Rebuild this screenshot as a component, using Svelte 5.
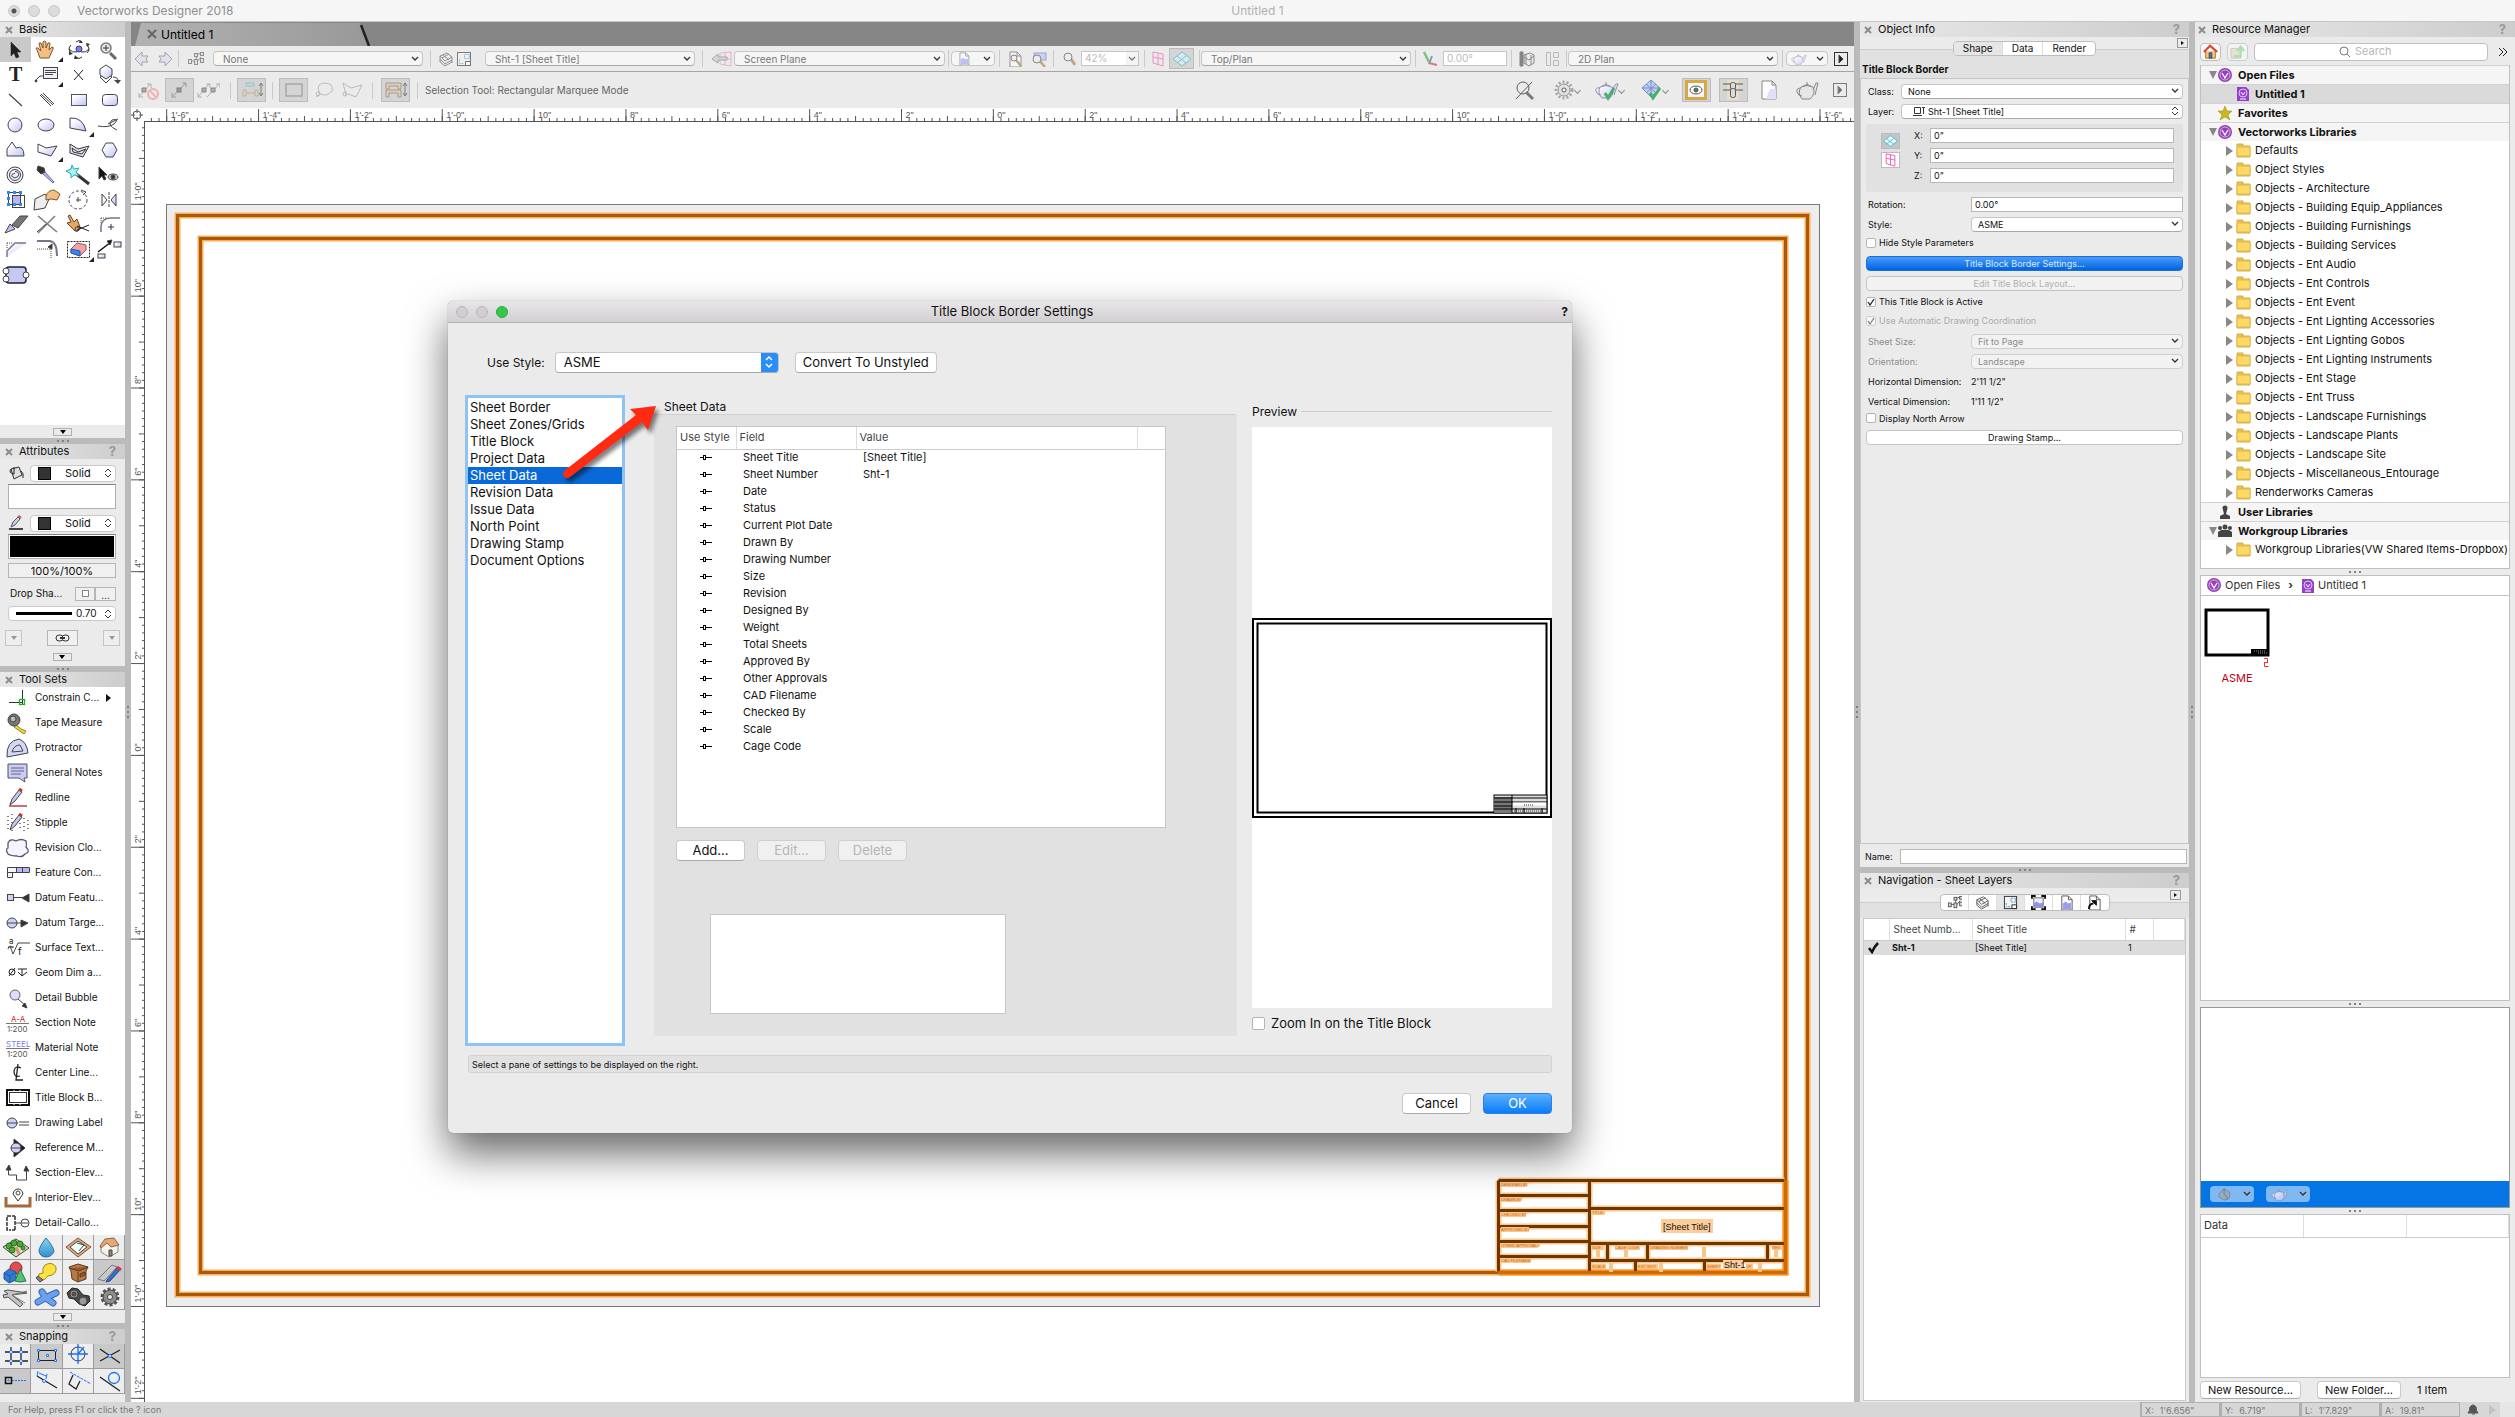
<script>
    // icon artwork, drawn inside an <svg class="ico"> whose default is a thin dark stroke
    const lens = '<path d="M16 16l6 6" stroke="#666" stroke-width="3"/><circle cx="12" cy="11" r="5" fill="#e8e8ee" stroke="#777" stroke-width="1.5"/>';
    const teapot = '<path d="M5 8Q2 14 7 19h8Q20 14 17 8Q11 5 5 8ZM17 11l4-6h2l-4 11M5 9Q0 8 1 12t5 4M11 6V3M7 7q4-3 8 0" fill="url(#lav)" stroke="#8080a0"/>';
    const plane = '<path d="M2 9L11 2 20 9 11 16ZM6 6l9 7M15 6l-9 7" stroke="#3bb5d0" fill="#e2f8fc"/>';
    const clip = '<path d="M3 1h7l4 4v11H3z" fill="#fff" stroke="#555"/><path d="M10 1v4h4" stroke="#555"/>';

    const art = {
        arrow: '<path d="M11 5V19L14 16 16 21 19 20 17 15 21 15Z" fill="#222" stroke="#222" stroke-width=".5"/>',
        hand: '<path d="M9 21L6 13Q4 10 7 11l3 3-2-7q0-2 2-1l2 5V5q1-2 3 0v6l2-5q2-1 2 1l-1 6 3-3q2 0 1 2l-4 9Z" fill="#f1be84" stroke="#80572c"/>',
        orbit: '<circle cx="16" cy="12" r="3" fill="#7a84e8" stroke="#333399"/><path d="M13 5Q16 2 19 5M13 20q3 3 6 0M8 8q-4 4 0 8M24 8q4 4 0 8M6 12q3 4 8 3M26 12q-3 4-8 3" stroke="#333"/><path d="M17 3l3 3-4 0zM12 18l3 4h-4zM6 14l4 3-4 1zM23 6l4 1-3 3z" fill="#333" stroke="none"/>',
        zoom: lens + '<path d="M9 11h6M12 8v6" stroke="#333"/>',
        text: '<text x="9" y="19" font-family="Liberation Serif" font-size="20" font-weight="bold" fill="#222" stroke="none">T</text>',
        callout: '<rect x="12.5" y="5.5" width="14" height="11" fill="#f0f0fa"/><path d="M14 8.500h11M14 10.500h11M14 12.500h8M12 14h-3l-5 5"/><circle cx="5" cy="19" r="1" fill="#222"/>',
        locus: '<path d="M11 8l9 10M20 8l-9 10" stroke="#123"/>',
        stackUp: '<path d="M6 15l6 6 6-6-6-4z" fill="#fff"/><path d="M12 3l6 4v6l-6 4-6-4V7z" fill="url(#lav)"/><path d="M19 15q5 0 5 4"/><path d="M20 18h7l-3 4z" fill="#444" stroke="none"/>',
        line: '<path d="M9 7l13 12" stroke-width="1.2"/>',
        dline: '<path d="M9 8l11 11M12 6l11 11M10 7l12 11"/>',
        rect: '<rect x="8.5" y="7.500" width="15" height="11" fill="url(#lav)" stroke="#555"/>',
        rrect: '<rect x="8.500" y="7.500" width="15" height="11" rx="3" fill="url(#lav)"/>',
        circle: '<circle cx="15" cy="13" r="7" fill="url(#lav)"/>',
        oval: '<ellipse cx="15" cy="13" rx="8" ry="6" fill="url(#lav)"/>',
        arc: '<path d="M7 6Q20 5 23 19L7 16Z" fill="url(#lav)"/>',
        freehand: '<path d="M4 14Q14 16 20 12Q26 6 18 8Q12 13 23 18M14 12l10-5"/>',
        bezier: '<path d="M7 19V12L12 5 16 11Q24 8 24 19Z" fill="url(#lav)"/>',
        poly: '<path d="M7 7l8 4 11-2-6 10-13-4z" fill="url(#lav)"/>',
        dpoly: '<path d="M7 7l8 5 11-3-6 11-13-4zM9 11l6 4 8-3-4 5-9-2z" fill="#e4e4f4" stroke="#333"/>',
        hex: '<path d="M12 6h7l4 7-4 7h-7l-4-7z" fill="url(#lav)"/>',
        spiral: '<circle cx="15" cy="13" r="8" fill="#f0f0ff"/><circle cx="15" cy="13" r="5.500"/><path d="M15 9.500q5 0 3 5-3 3-6 0-1-3 3-3"/>',
        dropper: '<path d="M13 9L23 20l-1 1L11 11z" fill="#b9bcf0" stroke="#6668aa"/><path d="M7 4l6 2 1 4-4 2-4-4z" fill="#333"/>',
        wand: '<path d="M12 11L26 22" stroke="#333" stroke-width="3"/><path d="M9 3l2 4 5-1-3 4 3 4-5-1-3 3V12L3 9l5-2z" fill="#a5f3f7" stroke="#3aa"/>',
        visible: '<path d="M5 5v12l3-3 2 4 2-1-2-4h3z" fill="#111"/><ellipse cx="19" cy="15" rx="5" ry="3" fill="#ccd"/><circle cx="19" cy="15" r="2" fill="#333"/>',
        clipTool: '<rect x="12.500" y="8.500" width="12" height="12"/><rect x="8.500" y="5.500" width="12" height="12"/><rect x="13" y="9" width="7" height="8" fill="#b8b8f5" stroke="none"/><path d="M7 4h3v3H7zM13 4h3v3h-3zM19 4h3v3h-3zM7 16h3v3H7zM19 16h3v3h-3zM7 10h3v3H7zM13 16h3v3h-3z" fill="#2a8be8" stroke="none"/>',
        reshape: '<path d="M4 12l10-5 4 5-4 9-11 2z" fill="#eee"/><path d="M15 9q2-6 8-6l6 4-3 6-6-1-5 1z" fill="#f1be84" stroke="#80572c"/>',
        rotate: '<circle cx="15" cy="13" r="9" stroke="#447" stroke-dasharray="3 2"/><path d="M13 13h5M15 10v5M18 3l5 2-3 3"/>',
        mirror: '<path d="M15 5v16" stroke-dasharray="3 1"/><path d="M8 7l5 6-5 6zM22 7l-5 6 5 6z" fill="url(#lav)"/>',
        knife: '<path d="M5 21l5-9 5 5z" fill="#bfc1f0"/><path d="M12 13L20 4h8l-10 12z" fill="#777"/>',
        trim: '<path d="M7 4l19 16M24 4L7 21" stroke="#778" stroke-width="1.5"/><path d="M6 20l9-8" stroke="#444"/>',
        cut: '<path d="M7 3l4 7 3-3 3 8q0 5-5 4l-8-8 4-1-3-6z" fill="#e7a764" stroke="#6d4520"/><path d="M14 14l12 5M14 18l12-5" stroke="#222"/><circle cx="14" cy="17" r="2"/>',
        fillet: '<path d="M7 20V14Q8 6 17 6h9" stroke="#778" stroke-width="1.5"/><path d="M17 12v6M14 15h6" stroke="#334"/><path d="M7 6h6M7 6v6" stroke-dasharray="1 1"/>',
        chamfer: '<path d="M7 20v-6l8-8h11v0L7 20" fill="url(#lav)" stroke="none"/><path d="M7 20v-6l8-8h11" stroke="#778" stroke-width="1.5"/><path d="M7 6h5M7 6v5" stroke-dasharray="1 1"/>',
        offset: '<path d="M6 4h13q7 1 7 15" stroke="#778" stroke-width="2"/><path d="M6 12h14v10" stroke-dasharray="1 1"/><path d="M17 10l4-3v5z" fill="#334"/>',
        eraser: '<rect x="4.500" y="4.500" width="22" height="16" stroke="#222" stroke-dasharray="2 1"/><path d="M8 12l6-6 9 2v5l-6 6-9-3z" fill="#f4a3a3" stroke="#955"/><path d="M8 12l9 2v5l-9-3z" fill="#3b86e6" stroke="#25c"/>',
        connect: '<path d="M4 15L17 5" stroke="#111" stroke-width="1.5"/><path d="M18 3l-5 1 3 4z" fill="#111"/><rect x="20" y="5" width="7" height="5" fill="url(#lav)"/><rect x="4" y="17" width="7" height="4" fill="url(#lav)"/>',
        block: '<rect x="6" y="5" width="20" height="16" rx="3" fill="#c6c8f5" stroke="#223" stroke-width="1.5"/><circle cx="6" cy="9" r="3" fill="#fff"/><circle cx="6" cy="17" r="3" fill="#fff"/><circle cx="26" cy="13" r="3" fill="#fff"/>',

        constrain: '<path d="M22.500 5v14M9 17.500h13" stroke="#333"/><rect x="19.500" y="14.500" width="5" height="5" stroke="#1db31d" stroke-width="1.3"/>',
        tape: '<path d="M15 14l6 5 5 2-2 3-10-7z" fill="#f2dc3a" stroke="#98811c"/><circle cx="14" cy="10" r="6" fill="#777"/><circle cx="13" cy="9" r="3" fill="#bbb"/>',
        protractor: '<path d="M7 22Q6 6 19 4Q27 7 28 18ZM12 17q2-7 8-7l3 6z" fill="#d5d7f8"/>',
        notes: '<path d="M8 4h19v14h-3l1 4-6-4H8z" fill="#c9cbf8" stroke="#555"/><path d="M11 8h13M11 11h13M11 14h10" stroke="#667"/>',
        redline: '<path d="M9 21h18" stroke="#b02030" stroke-width="1.3"/><path d="M10 20l2-6 7-9 3 2-7 9z" fill="#c4c9f4"/><path d="M19 4l3 2" stroke="#c33" stroke-width="3"/>',
        stipple: '<path d="M8 6v15M12 4v17M20 5v16M24 8v14M28 10v11" stroke="#333" stroke-dasharray="1 3" stroke-width="1.2"/><path d="M10 20l2-6 7-9 3 2-7 9z" fill="#c4c9f4"/><path d="M19 4l3 2" stroke="#c33" stroke-width="3"/>',
        cloud: '<path d="M8 8q2-5 8-2q5-3 10 0q1 4 0 6q5 5-1 7q-3 4-8 2q-6 0-9-2q-3-5 0-6z" fill="#f5f5ff" stroke="#557" stroke-width="1.3"/>',
        feature: '<path d="M7.500 7.500h22v5h-17v5h-5z" fill="#f4f4fc"/><path d="M17 8h12v4H17z" fill="#b5b8f4" stroke="none"/><path d="M16.500 8v4M22.500 8v4M8 12.500h5"/>',
        datum: '<rect x="7.500" y="9.500" width="6" height="6" fill="#d0d2fa"/><path d="M13 12.500h10"/><path d="M29 9v8l-7-4z" fill="#333"/>',
        target: '<circle cx="12" cy="13" r="5" fill="#d0d2fa"/><path d="M7 13h16"/><path d="M21 10l7 3-7 4z" fill="#333"/>',
        surface: '<path d="M10 11l3 8 5-11h12M8 12h6M13 13q-4-4-5 1"/><text x="9" y="9" font-size="8" fill="#222" stroke="none">a</text><text x="18" y="20" font-size="10" fill="#222" stroke="none">f</text>',
        geom: '<circle cx="12" cy="12" r="3" stroke="#222"/><path d="M9 16l6-8M18 9h9M22 9v6M18 12l4 4 5-4" stroke="#222"/>',
        bubble: '<circle cx="15" cy="10" r="5" fill="#dcdefa" stroke="#666"/><path d="M18 14l8 7"/><path d="M27 23l-5-2 3-3z" fill="#333"/>',
        section: '<text x="11" y="12" font-size="8" fill="#d02020" stroke="none">A-A</text><path d="M6 13.500h23" stroke="#777"/><text x="7" y="22" font-size="8" fill="#555" stroke="none">1:200</text>',
        material: '<text x="6" y="12" font-size="8" fill="#7a80e0" stroke="none">STEEL</text><path d="M6 13.500h23" stroke="#777"/><text x="7" y="22" font-size="8" fill="#555" stroke="none">1:200</text>',
        center: '<path d="M21 8q-6-3-7 3q0 7 6 5M18 4l-2 16h7" stroke="#222" stroke-width="1.3"/>',
        titleBlock: '<rect x="7" y="5" width="22" height="15" fill="#fff" stroke="#111" stroke-width="2"/><rect x="9.500" y="7.500" width="17" height="10" stroke="#333"/><path d="M14 5v2M20 5v2M14 18v2M20 18v2" stroke="#fff"/>',
        label: '<circle cx="12" cy="13" r="5" fill="#d0d2fa"/><path d="M7 13h11M19 12h10M19 15h10"/>',
        reference: '<path d="M14 4l11 9-11 9z" fill="#111"/><circle cx="16" cy="13" r="5" fill="#d0d2fa"/><path d="M11 13h10"/>',
        sectionElev: '<path d="M8.500 7v8h8v5h10V8"/><path d="M6 10l3-5 2 5zM24 11l2-5 3 5z" fill="#333"/>',
        interior: '<path d="M6 12v9h24v-9" stroke="#a36a3c" stroke-width="3"/><path d="M18 16l-5-7q1-5 5-5t5 5z" stroke="#333" fill="#fff"/><circle cx="18" cy="8" r="2"/>',
        callo: '<path d="M11 6H7v14h4M15 6v14M12 6h3M12 20h3" stroke="#333" stroke-width="1.5" stroke-dasharray="4 1"/><circle cx="25" cy="13" r="4"/><path d="M15 13h6M22 13h6"/>',

        site: '<path d="M3 12L16 4l13 9-13 9z" fill="#cfe6b4"/><g fill="#4ea53a" stroke="#2c6b20"><circle cx="9" cy="11" r="3"/><circle cx="14" cy="8" r="3"/><circle cx="20" cy="9" r="3"/><circle cx="12" cy="15" r="3"/><circle cx="23" cy="13" r="2"/></g><path d="M16 12l3 7" stroke="#d88" stroke-width="3"/>',
        drop: '<path d="M15 3Q8 12 8 16q1 6 7 6t8-6Q22 11 15 3Z" fill="url(#water)" stroke="#2273a4"/>',
        plan: '<path d="M3 12L15 3l13 9-13 10z" fill="#dfa97b" stroke="#7b5639"/><path d="M7 12l8-6 9 6-9 7z" fill="#eff"/><path d="M14 8l7 2-5 6"/>',
        house: '<path d="M7 11v6l8 5 9-5v-8l-6-4z" fill="#f5f3ee" stroke="#887"/><path d="M6 11l5-7 9-1 5 7-8 2-4-4-6 5z" fill="#e3a878" stroke="#8d6545"/><path d="M15 15h3v6h-3z" fill="#987"/>',
        solids: '<circle cx="16" cy="8" r="6" fill="#e04e50" stroke="#923"/><path d="M4 13l5-4 7 3v8l-7 3-5-4z" fill="#3479d5" stroke="#225a9c"/><path d="M4 13l6 3 6-4M10 16v6" stroke="#225a9c"/><path d="M20 9l6 12q-6 2-11 0z" fill="#51c46e" stroke="#275"/>',
        bulb: '<path d="M14 5q7-4 11 2 1 8-8 9l-4 4-6-2 1-4 4-1q-1-5 2-8z" fill="#ffe23d" stroke="#9b8724"/><path d="M7 16l5 4-3 2-4-4z" fill="#888"/>',
        box: '<path d="M6 7l9-3 10 3-2 4v8l-8 3-6-3-1-8z" fill="#b87946" stroke="#5d3a20"/><path d="M6 8l10 3 9-4M15 12v9M17 14l5-2v3l-5 2z" fill="#965a2e" stroke="#5d3a20"/>',
        drafting: '<path d="M4 19L18 5l5 2L10 21z" fill="#c9c9c9" stroke="#777"/><path d="M13 20L23 8l3 2-10 11-4 1z" fill="#356fd0" stroke="#224a95"/><path d="M23 7l4 3" stroke="#d34" stroke-width="3"/>',
        beam: '<path d="M4 6l4-1 19 3-15 2 11 9-3 3L8 12l-4 1-1-3 5-1z" fill="#c4c4c4" stroke="#555"/><path d="M27 6l-15 4 13 8" stroke="#777"/>',
        pipe: '<path d="M7 17L14 13 25 8M11 7l4 6 7 5" stroke="#3666b1" stroke-width="7" stroke-linecap="round" stroke-linejoin="round"/><path d="M7 17L14 13 25 8M11 7l4 6 7 5" stroke="#6aa0ee" stroke-width="5" stroke-linecap="round" stroke-linejoin="round"/>',
        bolt: '<path d="M4 8l5-5 6 1 5 6 6 1 1 5-5 5-6-2-5-5-5-1z" fill="#4a4a4a" stroke="#222"/><circle cx="11" cy="9" r="4" fill="#9a9a9a"/><circle cx="20" cy="16" r="4" fill="#999"/><circle cx="11" cy="9" r="2" fill="#555"/>',
        gear: '<circle cx="16" cy="12" r="8" stroke="#555" stroke-width="3" stroke-dasharray="3 2"/><circle cx="16" cy="12" r="7" fill="#8c8c8c" stroke="#444"/><circle cx="16" cy="12" r="2.500" fill="#eee"/>',

        snapGrid: '<path d="M5 8h23M5 17h23M11 3v18M21 3v18" stroke="#222" stroke-width="1.3"/><g fill="#fff" stroke="#1670ff"><circle cx="11" cy="8" r="1.5"/><circle cx="21" cy="8" r="1.5"/><circle cx="11" cy="17" r="1.5"/><circle cx="21" cy="17" r="1.5"/></g>',
        snapObj: '<rect x="7.500" y="6.500" width="17" height="10" stroke="#222"/><g fill="#fff" stroke="#1670ff"><path d="M6.500 5.500h2v2h-2zM23.500 5.500h2v2h-2zM6.500 15.500h2v2h-2zM23.500 15.500h2v2h-2zM15.500 10.500h2v2h-2z"/></g>',
        snapAngle: '<circle cx="15" cy="10" r="7" stroke="#334"/><path d="M5 10h20M15 0v20M15 10l6-7" stroke="#1670ff" stroke-width="1.3"/>',
        snapX: '<path d="M6 5l20 14M6 17L26 6" stroke="#222" stroke-width="1.3"/><circle cx="16" cy="12" r="1.5" stroke="#1670ff" fill="#fff"/>',
        snapSmart: '<rect x="5.500" y="8.500" width="6" height="6" stroke="#111" stroke-width="1.5"/><path d="M8 11h1v1H8zM12 11.500h14" stroke="#1670ff" stroke-dasharray="2 1"/>',
        snapDist: '<path d="M6 7l20 12" stroke="#222" stroke-width="1.3"/><path d="M8 4l7 3M7 2l-1 5M16 5l-1 5" stroke="#1670ff"/><circle cx="13" cy="12" r="1.5" stroke="#1670ff" fill="#fff"/>',
        snapPlane: '<path d="M10 6L6 15l7 5 4-8" stroke="#222" stroke-width="1.3"/><path d="M7 3l21 12" stroke="#1670ff" stroke-dasharray="3 1"/>',
        snapTan: '<circle cx="20" cy="9" r="5.5" stroke="#1670ff" stroke-width="1.3"/><path d="M6 8l20 14" stroke="#222" stroke-width="1.3"/>',

        back: '<path d="M8 1L1 8l7 7v-4h6l-2-3 2-3H8z" fill="#d8daf6" stroke="#777"/>',
        forward: '<path d="M8 1l7 7-7 7v-4H2l2-3-2-3h6z" fill="#d8daf6" stroke="#777"/>',
        classes: '<g fill="#ddd" stroke="#555"><path d="M4 10h4M9 8l1-4M10 11l4-5M9 4l5-2"/><rect x="1.500" y="8.500" width="3" height="4"/><rect x="7.500" y="8.500" width="3" height="5"/><rect x="7.500" y="2.500" width="3" height="3"/><rect x="13.500" y="1.500" width="3" height="3"/><rect x="13.500" y="7.500" width="3" height="4"/></g>',
        stack: '<path d="M2 5L9 2l5 4-7 4ZM2 8l5 5 7-4M2 11l5 4 7-4M2 5v6M14 6v6M5 4l6 5M11 3L4 7" stroke="#555"/>',
        sheetIcon: '<rect x="1.500" y="1.500" width="13" height="13" fill="#f4f4f4" stroke="#333"/><path d="M3.500 8.500v4h4M8.500 3.500h5v4h-5z" stroke="#4a9acc" stroke-dasharray="2 1"/><path d="M9.500 10.500h5v4h-5z" fill="#fff" stroke="#222"/>',
        screenPlane: '<path d="M9 2l11-1v14L9 13zM14 2v12M9 8h11" stroke="#e58ac0"/><path d="M1 8l6-5v3h9v3H7v3z" fill="#ccc" stroke="#777"/>',
        page: clip + '<path d="M4 9l3-2 3 2 3-1v7H4z" fill="#9b9dee" stroke="none"/>',
        fit: clip + '<path d="M9 9l5 6" stroke="#a87a30" stroke-width="2.5"/><circle cx="7" cy="7" r="3" fill="#eee"/>',
        fitObj: '<rect x="4" y="2" width="12" height="7" fill="#b7c4ee" stroke="#6478b8"/><path d="M9 9l6 7" stroke="#a87a30" stroke-width="2.5"/><circle cx="7" cy="8" r="4" fill="#eee"/>',
        mag: '<path d="M9 8l4 6" stroke="#a87a30" stroke-width="3"/><circle cx="6" cy="6" r="4" fill="#eee" stroke="#444"/>',
        pinkPlane: '<path d="M3 1l10 2v12L3 12zM8 2v12M3 6l10 2" stroke="#f050b0"/>',
        plane,
        axis: '<path d="M2 1l5 10" stroke="#3a3" stroke-width="2.5"/><path d="M7 13l3-8" stroke="#369" stroke-width="2"/><path d="M7 12l8 2" stroke="#c33" stroke-width="2"/>',
        layerOpt: '<path d="M1 1h3v14H1z" fill="#444"/><path d="M5 4l6-2 4 2v8l-5 3-5-3zM5 6l5 3 5-4M7 3v10M12 4v10"/>',
        split: '<path d="M2.500 1.500h4v13h-4zM9.500 1.500h5v5h-5zM9.500 9.500h5v5h-5z" stroke="#999"/>',
        teapot,
        play: '<rect x="1.500" y="1.500" width="13" height="13" stroke="#333"/><path d="M6 4l4 4-4 4z" fill="#222"/>',
        none: '<path d="M3 18l11-13M11 5h4v4M3 14v4h4" stroke="#888"/><path d="M6 9h4v4H6z" fill="#888"/><circle cx="17" cy="15" r="5" stroke="#f08a8a" stroke-width="2"/><path d="M14 12l6 6" stroke="#f08a8a" stroke-width="2"/>',
        single: '<path d="M5 18L19 4M15 4h4v4M5 14v4h4" stroke="#777"/><rect x="10" y="9" width="4" height="4" fill="#777"/>',
        multi: '<path d="M2 18L13 5M10 5h4v4M11 18L23 5M20 5h4v4M2 14v4h4" stroke="#888"/><path d="M6 9h4v4H6zM15 9h4v4h-4z" fill="#888"/>',
        resize: '<path d="M6 3h8v3H6z" stroke="#5bc"/><path d="M6 13h9M3 10h3v6H3zM15 10h3v6h-3z" stroke="#b96"/><path d="M21 3v13M19 6l2-3 2 3M19 13l2 3 2-3"/>',
        marquee: '<rect x="4" y="4" width="16" height="12" stroke="#888" stroke-width="1.5"/>',
        lasso: '<path d="M7 14Q2 4 11 3q10 0 8 8-5 6-12 3zl-4 3" stroke="#999"/><circle cx="5" cy="14" r="2" stroke="#999"/>',
        polyLasso: '<path d="M6 15L3 3l8 5 11-3-6 12-8-3" stroke="#999"/><circle cx="5" cy="14" r="2" stroke="#999"/>',
        chair: '<path d="M2 9V3h15v6h-3V6H5v3zM2 17v-7h15v7h-3v-4H5v4z" fill="#e7c9a4" stroke="#876"/><path d="M21 3v13M19 6l2-3 2 3M19 13l2 3 2-3"/>',
        noMag: '<path d="M4 20L20 3" stroke="#444"/><circle cx="11" cy="9" r="6"/><path d="M14 13l7 7" stroke="#666" stroke-width="3"/>',
        cog: '<circle cx="11" cy="11" r="8" stroke="#999" stroke-width="3" stroke-dasharray="2 2"/><circle cx="11" cy="11" r="6" fill="#ddd" stroke="#888"/><circle cx="11" cy="11" r="2" fill="#fff"/>',
        potCheck: teapot + '<path d="M10 14l3 5 6-10" stroke="#2aa84f" stroke-width="3"/>',
        gemCheck: '<path d="M1 9L10 1l9 8-9 9zM1 9h18M10 1v17M5 5l10 9M15 5L5 14" fill="#bccbf5" stroke="#5e7fbc"/><path d="M9 14l3 5 7-10" stroke="#2aa84f" stroke-width="3"/>',
        eye: '<rect x="2.500" y="2.500" width="19" height="17" fill="#fff" stroke="#d8a030" stroke-width="3"/><ellipse cx="12" cy="11" rx="6" ry="4"/><circle cx="12" cy="11" r="2" fill="#555"/>',
        chain: '<path d="M6 1h12v20H6z" fill="#ecdfc8" stroke="none"/><path d="M2 5h20M2 11h20"/><rect x="9.500" y="3.500" width="5" height="8" rx="2" fill="#ddd"/><rect x="9.500" y="9.500" width="5" height="9" rx="2" fill="#ddd"/>',
        newPage: '<path d="M4 2h10l4 4v14H4zM14 2v4h4" fill="#fff" stroke="#777"/><path d="M12 10h6v10H8z" fill="#dedff8" stroke="none"/>',
        kettle: '<path d="M6 8Q2 14 7 20h8Q21 15 18 8Q12 5 6 8ZM18 11l3-7h2l-3 12M6 9Q1 9 2 13t5 4M12 6V3M8 7q4-3 8 0" fill="#e6e6e6" stroke="#777"/>',

        bucket: '<path d="M3 4l8-2 3 8-8 4z" fill="#ddd" stroke="#333"/><path d="M3 4q-3 4 3 5M13 6q3 2 2 7M6 2v7" stroke="#222"/>',
        pencil: '<path d="M1 14h14" stroke="#111" stroke-width="1.5"/><path d="M3 12l2-5 5-5 2 2-5 6z" fill="#c9cff5" stroke="#555"/><path d="M10 1l3 2" stroke="#c55" stroke-width="2.5"/>',
        link: '<rect x="1" y="2" width="7" height="6" rx="3" stroke="#333"/><rect x="7" y="2" width="7" height="6" rx="3" stroke="#333"/><path d="M5 5h5" stroke="#333" stroke-width="2"/>',
        home: '<path d="M3 8v8h11V8" fill="#f4c878" stroke="#a06a20"/><path d="M1 9l7-7 8 7" stroke="#cf4a3a" stroke-width="2.5"/><path d="M7 10h3v6H7z" fill="#3a78c8"/>',
        upload: '<rect x="1" y="5" width="11" height="11" fill="#e8dccc" stroke="#bbb"/><path d="M4 14h8V6M8 8l4-5 4 5" stroke="#8fdc8f" stroke-width="2.5"/>',
        vw: '<circle cx="7" cy="7" r="7" fill="#9440b8" stroke="none"/><circle cx="7" cy="7" r="5" stroke="#d9b0ea"/><path d="M4 5l3 5 3-5" stroke="#fff" stroke-width="1.3"/>',
        vwFile: '<path d="M1 0h9l3 3v11H1z" fill="#9440c8" stroke="none"/><circle cx="7" cy="6" r="4" stroke="#e5c5f3"/><path d="M5 5l2 3 2-3M4 12h6" stroke="#fff"/>',
        star: '<path d="M7 0l2 5 5 0-4 4 2 5-5-3-5 3 2-5-4-4h5z" fill="#c8b820" stroke="#978a12" stroke-width=".5"/>',
        user: '<circle cx="7" cy="3" r="2.5" fill="#444" stroke="none"/><path d="M5 5h4l-1 4 4 2v3H2v-3l4-2z" fill="#444" stroke="none"/>',
        users: '<g fill="#444" stroke="none"><circle cx="7" cy="3" r="2.5"/><circle cx="2" cy="4" r="2"/><circle cx="12" cy="4" r="2"/><path d="M0 13V8l3-2h8l3 2v5z"/></g>',
        folder: '<path d="M1 1h6v2h7v11H1z" fill="#e8c050" stroke="#d9ae46"/><path d="M1 4h13v9H1z" fill="#ffd966" stroke="#dfb84f"/>',
        house2: '<path d="M2 8l6-6 7 5-1 7-6 2-6-4z" fill="#a0a8a8" stroke="#667"/><path d="M8 2v6l5 7" stroke="#556"/>',
        viewport: '<path d="M1 4V1h4M11 1h4v3M1 12v3h4M15 12v3h-4" stroke="#111" stroke-width="2"/><path d="M3 3h10v10H3z" fill="#f0f0fc" stroke="#666"/><path d="M3 9l3-2 3 2 4-1v5H3z" fill="#8f92ec" stroke="none"/>',
        refs: clip + '<path d="M2 15q0-6 5-6" stroke="#111" stroke-width="2"/><path d="M5 6h5v5z" fill="#111" stroke="#111"/>'
    };

    const tools = [
        'arrow', 'hand', 'orbit', 'zoom',
        'text', 'callout', 'locus', 'stackUp',
        'line', 'dline', 'rect', 'rrect',
        'circle', 'oval', 'arc', 'freehand',
        'bezier', 'poly', 'dpoly', 'hex',
        'spiral', 'dropper', 'wand', 'visible',
        'clipTool', 'reshape', 'rotate', 'mirror',
        'knife', 'trim', 'cut', 'fillet',
        'chamfer', 'offset', 'eraser', 'connect',
        'block'
    ];
    const withMenu = ['hand', 'callout', 'arc', 'poly', 'eraser'];

    const toolSets = [
        ['constrain', 'Constrain C...'],
        ['tape', 'Tape Measure'],
        ['protractor', 'Protractor'],
        ['notes', 'General Notes'],
        ['redline', 'Redline'],
        ['stipple', 'Stipple'],
        ['cloud', 'Revision Clo...'],
        ['feature', 'Feature Con...'],
        ['datum', 'Datum Featu...'],
        ['target', 'Datum Targe...'],
        ['surface', 'Surface Text...'],
        ['geom', 'Geom Dim a...'],
        ['bubble', 'Detail Bubble'],
        ['section', 'Section Note'],
        ['material', 'Material Note'],
        ['center', 'Center Line...'],
        ['titleBlock', 'Title Block B...'],
        ['label', 'Drawing Label'],
        ['reference', 'Reference M...'],
        ['sectionElev', 'Section-Elev...'],
        ['interior', 'Interior-Elev...'],
        ['callo', 'Detail-Callo...']
    ];
    const setIcons = ['site', 'drop', 'plan', 'house', 'solids', 'bulb', 'box', 'drafting', 'beam', 'pipe', 'bolt', 'gear'];
    const snaps = ['snapGrid', 'snapObj', 'snapAngle', 'snapX', 'snapSmart', 'snapDist', 'snapPlane', 'snapTan'];
    const snapsOn = ['snapObj', 'snapX', 'snapSmart'];

    const libraries = [
        'Defaults', 'Object Styles', 'Objects - Architecture', 'Objects - Building Equip_Appliances',
        'Objects - Building Furnishings', 'Objects - Building Services', 'Objects - Ent Audio',
        'Objects - Ent Controls', 'Objects - Ent Event', 'Objects - Ent Lighting Accessories',
        'Objects - Ent Lighting Gobos', 'Objects - Ent Lighting Instruments', 'Objects - Ent Stage',
        'Objects - Ent Truss', 'Objects - Landscape Furnishings', 'Objects - Landscape Plants',
        'Objects - Landscape Site', 'Objects - Miscellaneous_Entourage', 'Renderworks Cameras'
    ];

    const panes = [
        'Sheet Border', 'Sheet Zones/Grids', 'Title Block', 'Project Data', 'Sheet Data',
        'Revision Data', 'Issue Data', 'North Point', 'Drawing Stamp', 'Document Options'
    ];
    let pane = $state('Sheet Data');

    const fields = [
        ['Sheet Title', '[Sheet Title]'], ['Sheet Number', 'Sht-1'], ['Date', ''], ['Status', ''],
        ['Current Plot Date', ''], ['Drawn By', ''], ['Drawing Number', ''], ['Size', ''],
        ['Revision', ''], ['Designed By', ''], ['Weight', ''], ['Total Sheets', ''],
        ['Approved By', ''], ['Other Approvals', ''], ['CAD Filename', ''], ['Checked By', ''],
        ['Scale', ''], ['Cage Code', '']
    ];

    const coords = [['X:', `1'6.656"`], ['Y:', '6.719"'], ['L:', `1'7.829"`], ['A:', '19.81°']];

    // rulers: one labelled tick every two inches, twelve small ones between
    const step = 91.85;
    const inch = (n) => (n >= 12 ? `1'-${n - 12}"` : `${n}"`);
    const ticks = (from, first, count) =>
        Array.from({ length: count }, (_, i) => ({ at: from + (i - first) * step / 12, tall: (i - first) % 6 === 0 }));
    const across = Array.from({ length: 19 }, (_, i) => ({ at: 166.7 + i * step, text: inch(Math.abs(i - 9) * 2) }));
    const down = Array.from({ length: 14 }, (_, i) => ({ at: 204.3 + i * step, text: inch(Math.abs(i - 6) * 2) }));
    const minorX = ticks(166.7, 2, 223);
    const minorY = ticks(204.3, 10, 167);

    // title block linework: x1 y1 x2 y2
    const blockLines = [
        [1498, 1180, 1784, 1180], [1589, 1208, 1784, 1208], [1589, 1243, 1784, 1243], [1589, 1260, 1784, 1260],
        [1498, 1195, 1588, 1195], [1498, 1210, 1588, 1210], [1498, 1226, 1588, 1226], [1498, 1241, 1588, 1241], [1498, 1256, 1588, 1256],
        [1498, 1180, 1498, 1271], [1589, 1180, 1589, 1271],
        [1607, 1243, 1607, 1260], [1647, 1243, 1647, 1260], [1767, 1243, 1767, 1260],
        [1635, 1260, 1635, 1271], [1704, 1260, 1704, 1271]
    ];
    const blockTexts = [
        ['DESIGNED BY', 1501, 1182, 26], ['DRAWN BY', 1501, 1197, 20], ['CHECKED BY', 1501, 1212, 25],
        ['APPROVED BY', 1501, 1227, 28], ['OTHER APPROVALS', 1501, 1243, 37], ['CAD FILENAME', 1501, 1258, 30],
        ['TITLE', 1592, 1210, 13], ['SIZE', 1592, 1245, 12], ['CAGE CODE', 1615, 1245, 25],
        ['DRAWING NUMBER', 1650, 1245, 38], ['REV', 1772, 1245, 10], ['SCALE', 1592, 1264, 14],
        ['EST WGT', 1638, 1264, 20], ['SHEET', 1707, 1264, 14], ['OF', 1746, 1264, 7]
    ];
    const inserts = [[1596, 1247], [1624, 1247], [1702, 1247], [1774, 1247], [1609, 1262], [1659, 1262], [1758, 1262]];
</script>

{#snippet icon(name, w = 31, h = 25)}
    <svg class="ico" width={w} height={h} viewBox="0 0 {w} {h}" aria-hidden="true">{@html art[name]}</svg>
{/snippet}

{#snippet head(title, help = true)}
    <header class="panel-head">
        <button class="close" aria-label="Close {title}"><svg class="ico" width="8" height="8" viewBox="0 0 8 8"><path d="M1 1l6 6M7 1L1 7" stroke="#8c8c8c" stroke-width="2" /></svg></button>
        <h2>{title}</h2>
        {#if help}<span class="help">?</span>{/if}
    </header>
{/snippet}

{#snippet fold()}
    <div class="fold"><button aria-label="Expand panel"><svg width="6" height="4" viewBox="0 0 6 4"><path d="M0 0h6L3 4z" /></svg></button></div>
{/snippet}

{#snippet dots()}
    <div class="dots"><i></i><i></i><i></i></div>
{/snippet}

<svg class="defs" width="0" height="0" aria-hidden="true">
    <defs>
        <linearGradient id="lav" x1="0" y1="0" x2="1" y2="1">
            <stop offset=".2" stop-color="#fff" />
            <stop offset="1" stop-color="#bfc2f6" />
        </linearGradient>
        <linearGradient id="water" x1="0" y1="0" x2="0" y2="1">
            <stop offset="0" stop-color="#8fd0f2" />
            <stop offset="1" stop-color="#2f8fcc" />
        </linearGradient>
    </defs>
</svg>

<div class="app">
    <header class="titlebar">
        <span class="lights"><i class="edited"></i><i></i><i></i></span>
        <span class="app-name">Vectorworks Designer 2018</span>
        <span class="doc-name">Untitled 1</span>
    </header>

    <div class="main">
        <aside class="left">
            {@render head('Basic', false)}
            <div class="tools">
                {#each tools as t}
                    <button class:on={t === 'arrow'} aria-label={t}>
                        {@render icon(t)}
                        {#if withMenu.includes(t)}<i class="more"></i>{/if}
                    </button>
                {/each}
            </div>
            {@render fold()}
            {@render dots()}

            {@render head('Attributes')}
            <div class="attrs">
                <div class="attr-row">
                    {@render icon('bucket', 16, 16)}
                    <label class="solid"><i></i><select aria-label="Fill style"><option>Solid</option></select></label>
                </div>
                <div class="swatch"></div>
                <div class="attr-row">
                    {@render icon('pencil', 16, 16)}
                    <label class="solid"><i></i><select aria-label="Pen style"><option>Solid</option></select></label>
                </div>
                <div class="swatch black"></div>
                <button class="flat opacity">100%/100%</button>
                <div class="shadow-row">
                    <span>Drop Sha...</span>
                    <button class="flat" aria-label="Drop shadow"><i class="sq"></i></button>
                    <button class="flat">...</button>
                </div>
                <label class="weight"><i></i><select aria-label="Line thickness"><option>0.70</option></select></label>
                <div class="ends">
                    <button class="flat dim" aria-label="Start marker"><i class="tri"></i></button>
                    <button class="flat" aria-label="Link markers">{@render icon('link', 15, 10)}</button>
                    <button class="flat dim" aria-label="End marker"><i class="tri"></i></button>
                </div>
                {@render fold()}
            </div>
            {@render dots()}

            {@render head('Tool Sets', false)}
            <div class="sets">
                {#each toolSets as [name, label], i}
                    <button class="set">{@render icon(name, 32, 25)}<span>{label}</span>{#if i === 0}<i class="right"></i>{/if}</button>
                {/each}
            </div>
            <div class="cells">
                {#each setIcons as name}
                    <button class:on={name === 'drafting'} aria-label={name}>{@render icon(name, 30, 24)}</button>
                {/each}
            </div>
            {@render fold()}
            {@render dots()}

            {@render head('Snapping')}
            <div class="cells">
                {#each snaps as name}
                    <button class:on={snapsOn.includes(name)} aria-label={name}>{@render icon(name, 30, 24)}</button>
                {/each}
            </div>
        </aside>

        <div class="split"><i></i><i></i><i></i></div>

        <main class="center">
            <nav class="tabs">
                <div class="tab">
                    <svg width="240" height="24" viewBox="0 0 240 24" aria-hidden="true"><path d="M4 24L10 1H229L238 24Z" fill="url(#tab)" /><path d="M230 3l8 21" stroke="#222" stroke-width="2.5" />
                        <defs><linearGradient id="tab"><stop offset="0" stop-color="#b2b2b2" /><stop offset="1" stop-color="#999" /></linearGradient></defs></svg>
                    <a href="#doc"><svg class="ico" width="10" height="10" viewBox="0 0 10 10"><path d="M1 1l8 8M9 1L1 9" stroke="#666" stroke-width="2" /></svg>Untitled 1</a>
                </div>
            </nav>

            <div class="viewbar">
                <button aria-label="Back">{@render icon('back', 16, 16)}</button>
                <button aria-label="Forward">{@render icon('forward', 16, 16)}</button>
                <i class="sep"></i>
                <button aria-label="Classes">{@render icon('classes', 18, 16)}</button>
                <select aria-label="Active class"><option>None</option></select>
                <i class="sep"></i>
                <span class="pair">{@render icon('stack', 16, 16)}{@render icon('sheetIcon', 16, 16)}</span>
                <select aria-label="Active layer"><option>Sht-1 [Sheet Title]</option></select>
                <i class="sep"></i>
                <button aria-label="Plane">{@render icon('screenPlane', 22, 16)}</button>
                <select aria-label="Active plane"><option>Screen Plane</option></select>
                <i class="sep"></i>
                <label class="icon-select">{@render icon('page', 16, 16)}<select aria-label="Saved views"></select></label>
                <i class="sep"></i>
                <button aria-label="Fit to page">{@render icon('fit', 16, 16)}</button>
                <button aria-label="Fit to objects">{@render icon('fitObj', 18, 16)}</button>
                <i class="sep"></i>
                {@render icon('mag', 14, 16)}
                <label class="zoom"><input value="42%" aria-label="Zoom" /></label>
                <i class="sep"></i>
                <button aria-label="Unified view">{@render icon('pinkPlane', 16, 16)}</button>
                <button class="pressed" aria-label="Plan rotation">{@render icon('plane', 22, 18)}</button>
                <i class="sep"></i>
                <select aria-label="View"><option>Top/Plan</option></select>
                <i class="sep"></i>
                {@render icon('axis', 18, 16)}
                <input class="angle" value="0.00°" aria-label="Rotation angle" />
                <i class="sep"></i>
                <button aria-label="Layer options">{@render icon('layerOpt', 16, 16)}</button>
                <button aria-label="Multiple panes">{@render icon('split', 16, 16)}</button>
                <i class="sep"></i>
                <select aria-label="Projection"><option>2D Plan</option></select>
                <i class="sep"></i>
                <label class="icon-select">{@render icon('teapot', 24, 20)}<select aria-label="Render mode"></select></label>
                <button class="menu" aria-label="View bar menu">{@render icon('play', 16, 16)}</button>
            </div>

            <div class="modebar">
                <button aria-label="Disable scaling">{@render icon('none', 24, 22)}</button>
                <button class="pressed" aria-label="Single scaling">{@render icon('single', 24, 22)}</button>
                <button aria-label="Unrestricted scaling">{@render icon('multi', 24, 22)}</button>
                <i class="sep"></i>
                <button class="pressed" aria-label="Connected walls">{@render icon('resize', 24, 20)}</button>
                <i class="sep"></i>
                <button class="pressed" aria-label="Rectangular marquee">{@render icon('marquee', 24, 20)}</button>
                <button aria-label="Lasso marquee">{@render icon('lasso', 22, 20)}</button>
                <button aria-label="Polygonal marquee">{@render icon('polyLasso', 24, 20)}</button>
                <i class="sep"></i>
                <button class="pressed" aria-label="Connected objects">{@render icon('chair', 24, 20)}</button>
                <i class="sep"></i>
                <span class="mode-text">Selection Tool: Rectangular Marquee Mode</span>
                <button class="strong" aria-label="Snap loupe">{@render icon('noMag', 24, 22)}</button>
                <button class="strong" aria-label="Preferences">{@render icon('cog', 22, 22)}<i class="chev"></i></button>
                <button class="strong" aria-label="Render quality">{@render icon('potCheck', 24, 22)}<i class="chev"></i></button>
                <button class="strong" aria-label="Geometry quality">{@render icon('gemCheck', 22, 22)}<i class="chev"></i></button>
                <button class="pressed strong" aria-label="Show viewports">{@render icon('eye', 24, 22)}</button>
                <button class="pressed strong" aria-label="Link">{@render icon('chain', 24, 22)}</button>
                <button class="strong" aria-label="New page">{@render icon('newPage', 22, 22)}</button>
                <button class="strong" aria-label="Render">{@render icon('kettle', 24, 22)}</button>
                <button aria-label="Mode bar menu">{@render icon('play', 16, 16)}</button>
            </div>

            <svg class="canvas" viewBox="131 108 1723 1294" preserveAspectRatio="xMinYMin slice">
                <rect x="131" y="108" width="1723" height="1294" fill="#fff" />
                <g class="ruler">
                    <path d="M144 121.5H1854M144.5 121V1402" />
                    {#each minorX as t}<path d="M{t.at} 121v{t.tall ? -5 : -3}" />{/each}
                    {#each minorY as t}<path d="M144 {t.at}h{t.tall ? -5 : -2}" />{/each}
                    {#each across as t}
                        <path d="M{t.at} 109v12" />
                        <text x={t.at + 4} y="118">{t.text}</text>
                    {/each}
                    {#each down as t}
                        <path d="M131 {t.at}h13" />
                        <text transform="translate(141 {t.at - 4}) rotate(-90)">{t.text}</text>
                    {/each}
                    <circle cx="137" cy="115" r="4" /><path d="M131 115h4M139 115h4M137 109v4M137 117v4" />
                </g>
                <rect x="166.5" y="204.5" width="1653" height="1102" fill="#ededed" stroke="#777" />
                <rect x="177.5" y="215.5" width="1630" height="1079" fill="#fff" stroke="#fbac58" stroke-width="6" />
                <rect x="177.5" y="215.5" width="1630" height="1079" fill="none" stroke="#a85a08" stroke-width="3" />
                <rect x="200.5" y="238.5" width="1585" height="1034" fill="none" stroke="#fbac58" stroke-width="6" />
                <rect x="200.5" y="238.5" width="1585" height="1034" fill="none" stroke="#a85a08" stroke-width="3" />
                <g transform="translate(.5 .5)">
                    {#each blockLines as [x1, y1, x2, y2]}<path d="M{x1} {y1}L{x2} {y2}" stroke="#fec58a" stroke-width="6" />{/each}
                    <path d="M1498 1272H1785V1180" fill="none" stroke="#fb8d1c" stroke-width="6" />
                    {#each blockLines as [x1, y1, x2, y2]}<path d="M{x1} {y1}L{x2} {y2}" stroke="#6b3804" stroke-width="3" />{/each}
                    <path d="M1498 1272H1785V1180" fill="none" stroke="#cc6a04" stroke-width="3" />
                </g>
                {#each inserts as [x, y]}<rect {x} {y} width="4" height="10" fill="#fec58a" />{/each}
                {#each blockTexts as [text, x, y, w]}
                    <rect {x} {y} width={w} height="5" fill="#fec58a" />
                    <text class="tiny" {x} y={y + 4}>{text}</text>
                {/each}
                <rect x="1661" y="1219" width="52" height="14" fill="#fecd9a" />
                <text class="sheet-text" x="1663" y="1230">[Sheet Title]</text>
                <rect x="1723" y="1260" width="20" height="10" fill="#fecd9a" />
                <text class="sheet-text" x="1724" y="1268">Sht-1</text>
            </svg>
        </main>

        <div class="split"><i></i><i></i><i></i></div>

        <aside class="info">
            {@render head('Object Info')}
            <div class="tab-strip">
                <div class="segments">
                    <button class="on">Shape</button><button>Data</button><button>Render</button>
                </div>
                <button class="corner" aria-label="Object info menu"><i class="right"></i></button>
            </div>
            <h3>Title Block Border</h3>
            <div class="shape">
                <div class="row"><label for="cls">Class:</label><select id="cls"><option>None</option></select></div>
                <div class="row">
                    <label for="lay">Layer:</label>
                    <select id="lay" class="layer"><option>Sht-1 [Sheet Title]</option></select>
                </div>
                <div class="xyz">
                    <div class="planes">
                        <button class="on" aria-label="Layer plane">{@render icon('plane', 22, 18)}</button>
                        <button aria-label="Screen plane">{@render icon('pinkPlane', 16, 16)}</button>
                    </div>
                    <div class="xyz-fields">
                        {#each ['X', 'Y', 'Z'] as axis}
                            <label>{axis}: <input value={'0"'} /></label>
                        {/each}
                    </div>
                </div>
                <div class="row wide"><label for="rot">Rotation:</label><input id="rot" value="0.00°" /></div>
                <div class="row wide"><label for="sty">Style:</label><select id="sty"><option>ASME</option></select></div>
                <label class="check"><input type="checkbox" />Hide Style Parameters</label>
                <button class="mini blue">Title Block Border Settings...</button>
                <button class="mini" disabled>Edit Title Block Layout...</button>
                <label class="check"><input type="checkbox" checked />This Title Block is Active</label>
                <label class="check off"><input type="checkbox" checked disabled />Use Automatic Drawing Coordination</label>
                <div class="row wide off"><label for="siz">Sheet Size:</label><select id="siz" disabled><option>Fit to Page</option></select></div>
                <div class="row wide off"><label for="ori">Orientation:</label><select id="ori" disabled><option>Landscape</option></select></div>
                <div class="row wide"><span>Horizontal Dimension:</span><span>2'11 1/2"</span></div>
                <div class="row wide"><span>Vertical Dimension:</span><span>1'11 1/2"</span></div>
                <label class="check last"><input type="checkbox" />Display North Arrow</label>
                <button class="mini">Drawing Stamp...</button>
            </div>
            <label class="name-row">Name: <input /></label>
            {@render dots()}

            {@render head('Navigation - Sheet Layers')}
            <div class="tab-strip nav">
                <div class="segments icons">
                    {#each ['classes', 'stack', 'sheetIcon', 'viewport', 'page', 'refs'] as name}
                        <button class:on={name === 'sheetIcon'} aria-label={name}>{@render icon(name, 16, 16)}</button>
                    {/each}
                </div>
                <button class="corner" aria-label="Navigation menu"><i class="right"></i></button>
            </div>
            <div class="nav-list">
                <table>
                    <thead><tr><th class="c1"></th><th class="c2">Sheet Numb...</th><th class="c3">Sheet Title</th><th class="c4">#</th><th></th></tr></thead>
                    <tbody><tr><td><svg class="ico" width="14" height="12" viewBox="0 0 14 12" aria-label="Active"><path d="M2 6l3 4q2-5 6-9" stroke="#111" stroke-width="2.500" /></svg></td><td><b>Sht-1</b></td><td>[Sheet Title]</td><td>1</td><td></td></tr></tbody>
                </table>
            </div>
        </aside>

        <div class="split"><i></i><i></i><i></i></div>

        <aside class="resources">
            {@render head('Resource Manager')}
            <div class="res-bar">
                <button class="sq-btn" aria-label="Home">{@render icon('home', 17, 17)}</button>
                <button class="sq-btn dim" aria-label="Up one level">{@render icon('upload', 17, 17)}</button>
                <label class="search"><svg class="ico" width="12" height="12" viewBox="0 0 12 12"><circle cx="5" cy="5" r="4" stroke="#777" /><path d="M8 8l3 3" stroke="#777" /></svg><input placeholder="Search" aria-label="Search" size="6" /></label>
                <button class="chevrons" aria-label="More"><svg class="ico" width="10" height="10" viewBox="0 0 10 10"><path d="M1 1l4 4-4 4M5 1l4 4-4 4" stroke="#222" /></svg></button>
            </div>
            <ul class="tree">
                <li class="root"><i class="down"></i>{@render icon('vw', 15, 15)}Open Files</li>
                <li class="root picked"><i class="gap"></i>{@render icon('vwFile', 14, 14)}Untitled 1</li>
                <li class="root"><i class="gap"></i>{@render icon('star', 15, 15)}Favorites</li>
                <li class="root"><i class="down"></i>{@render icon('vw', 15, 15)}Vectorworks Libraries</li>
                {#each libraries as lib}
                    <li class="lib"><i class="right"></i>{@render icon('folder', 15, 15)}{lib}</li>
                {/each}
                <li class="root"><i class="gap"></i>{@render icon('user', 15, 15)}User Libraries</li>
                <li class="root"><i class="down"></i>{@render icon('users', 15, 15)}Workgroup Libraries</li>
                <li class="lib"><i class="right"></i>{@render icon('folder', 15, 15)}Workgroup Libraries(VW Shared Items-Dropbox)</li>
            </ul>
            {@render dots()}
            <section class="browser">
                <nav>{@render icon('vw', 15, 15)}<span>Open Files</span><b>›</b>{@render icon('vwFile', 14, 14)}<span>Untitled 1</span></nav>
                <figure>
                    <svg width="66" height="60" viewBox="0 0 66 60" aria-hidden="true">
                        <rect x="2" y="3" width="62" height="45" fill="#fff" stroke="#000" stroke-width="3" />
                        <path d="M47 42h18v6H47z" />
                        <path d="M50 44h12M54 46h9" stroke="#999" stroke-dasharray="1 1" />
                        <path d="M60 51.500h3.500v4h-3v4h4M60 55.500h4" stroke="#e33" fill="none" />
                    </svg>
                    <figcaption>ASME</figcaption>
                </figure>
            </section>
            {@render dots()}
            <section class="preview">
                <div class="preview-bar">
                    <label class="glass">{@render icon('house2', 17, 17)}<select aria-label="Preview view"></select></label>
                    <label class="glass">{@render icon('teapot', 24, 20)}<select aria-label="Preview render mode"></select></label>
                </div>
            </section>
            {@render dots()}
            <section class="data">
                <table><thead><tr><th>Data</th><th></th><th></th></tr></thead></table>
            </section>
            <footer>
                <button class="push">New Resource...</button>
                <button class="push">New Folder...</button>
                <span>1 Item</span>
            </footer>
        </aside>
    </div>

    <footer class="status">
        <span class="hint">For Help, press F1 or click the ? icon</span>
        {#each coords as [k, v]}<span class="coord">{k}<span>{v}</span></span>{/each}
        <svg class="bell" width="38" height="13" viewBox="0 0 38 13" aria-hidden="true"><path d="M6 10Q8 8 8 4q3-4 6 0q0 4 2 6zM10 11h3" fill="#555" stroke="#555" /><path d="M27 2l7 5-7 5z" fill="#c2c2c2" /></svg>
    </footer>

    <div class="dialog" role="dialog" aria-label="Title Block Border Settings">
        <header>
            <span class="lights"><i></i><i></i><i class="green"></i></span>
            <h1>Title Block Border Settings</h1>
            <b>?</b>
        </header>
        <div class="style-row">
            <label for="use">Use Style:</label>
            <select id="use"><option>ASME</option></select>
            <button class="push">Convert To Unstyled</button>
        </div>
        <div class="body">
            <ul class="panes">
                {#each panes as p}
                    <li><button class:on={p === pane} onclick={() => (pane = p)}>{p}</button></li>
                {/each}
            </ul>
            <section class="group">
                <h2>{pane}</h2>
                <div class="group-box">
                    <div class="table-box">
                        <table>
                            <thead><tr><th class="f1">Use Style</th><th class="f2">Field</th><th class="f3">Value</th><th></th></tr></thead>
                            <tbody>
                                {#each fields as [field, value]}
                                    <tr>
                                        <td class="pin"><svg width="13" height="7" viewBox="0 0 13 7" aria-label="Uses style"><path d="M0 3.5h3M6 3.5h6" stroke="#000" /><rect x="3.5" y="1.5" width="2" height="4" fill="none" stroke="#000" /></svg></td>
                                        <td>{field}</td>
                                        <td>{value}</td>
                                        <td></td>
                                    </tr>
                                {/each}
                            </tbody>
                        </table>
                    </div>
                    <div class="edit-row">
                        <button class="push">Add...</button>
                        <button class="push" disabled>Edit...</button>
                        <button class="push" disabled>Delete</button>
                    </div>
                    <div class="note"></div>
                </div>
            </section>
            <section class="view">
                <h2>Preview</h2>
                <div class="paper">
                    <svg viewBox="0 0 300 200" aria-hidden="true">
                        <rect x="1" y="1" width="298" height="198" fill="#fff" stroke="#000" stroke-width="2" />
                        <rect x="5.5" y="5.5" width="289" height="189" fill="none" stroke="#000" stroke-width="2" />
                        <rect x="242" y="177" width="53" height="18" fill="#ddd" stroke="#000" />
                        <path d="M242 179h18v16h-18z" fill="#777" />
                        <path d="M242 180h53M242 184h53M242 188h18M242 191h53M260 177v18M264 190v5M272 190v5M290 190v5" stroke="#000" />
                        <path d="M261 186h33" stroke="#fff" stroke-width="3" />
                        <path d="M272 187h9M262 193h30" stroke="#333" stroke-dasharray="1 1" />
                    </svg>
                </div>
                <label class="check"><input type="checkbox" />Zoom In on the Title Block</label>
            </section>
        </div>
        <p class="tip">Select a pane of settings to be displayed on the right.</p>
        <div class="actions">
            <button class="push">Cancel</button>
            <button class="push ok">OK</button>
        </div>
        <svg class="pointer" width="110" height="90" viewBox="0 0 110 90" aria-hidden="true">
            <path d="M7 72Q5 76 7 78 10 80 13 78L85 23 91 31 99 7 73 10 79 16Z" fill="#ff2a12" />
        </svg>
    </div>
</div>

<style>
    :global(body) {
        margin: 0;
        background: #ebebeb;
    }

    .app {
        position: relative;
        display: grid;
        grid-template-rows: 22px minmax(0, 1fr) 15px;
        min-height: 100vh;
        overflow: hidden;
        font: 11px/15px Inter, "Open Sans", sans-serif;
        color: #111;
        background: #ebebeb;
    }

    .app * {
        box-sizing: border-box;
    }

    .defs {
        position: absolute;
    }

    button,
    input,
    select {
        margin: 0;
        padding: 0;
        border: 0;
        font: inherit;
        color: inherit;
        background: none;
    }

    select {
        appearance: none;
        min-width: 0;
        border: 1px solid #c6c6c6;
        border-bottom-color: #aaa;
        border-radius: 4px;
        opacity: 1;
        background: #fff url("data:image/svg+xml,%3Csvg xmlns='http://www.w3.org/2000/svg' width='8' height='6'%3E%3Cpath d='M1 1l3 3 3-3' fill='none' stroke='%23333' stroke-width='1.3'/%3E%3C/svg%3E") no-repeat right 3px center;
    }

    h1, h2, h3, p, ul, figure {
        margin: 0;
        padding: 0;
        font-size: inherit;
        font-weight: normal;
        list-style: none;
    }

    table {
        width: 100%;
        border-collapse: collapse;
        table-layout: fixed;
    }

    th, td {
        padding: 0;
        text-align: left;
        font-weight: normal;
        white-space: nowrap;
    }

    .ico {
        flex: none;
        display: block;
        fill: none;
        stroke: #444;
        font-family: Inter, sans-serif;
    }

    /* title bar */
    .titlebar {
        display: flex;
        align-items: center;
        position: relative;
        padding-left: 8px;
        border-bottom: 1px solid #c6c6c6;
        font-size: 12px;
        color: #8f8f8f;
        background: #f6f6f6;
    }

    .lights {
        display: flex;
        gap: 8px;
    }

    .lights i {
        width: 12px;
        height: 12px;
        border: 1px solid #c6c6c6;
        border-radius: 50%;
        background: #dcdcdc;
    }

    .lights .edited {
        background: radial-gradient(#555 0 2px, #dcdcdc 3px);
    }

    .dialog .lights i {
        border-color: #b8b8b8;
        background: #cfcfcf;
    }

    .dialog .lights .green {
        border-color: #2aae38;
        background: #34c84a;
    }

    .app-name {
        margin-left: 17px;
    }

    .doc-name {
        position: absolute;
        left: 50%;
        transform: translateX(-50%);
        color: #b0b0b0;
    }

    .main {
        display: grid;
        grid-template-columns: 125px 6px minmax(0, 1fr) 6px 329px 6px 320px;
    }

    .split {
        display: flex;
        flex-direction: column;
        align-items: center;
        justify-content: center;
        gap: 3px;
        background: #bbb;
    }

    .split i,
    .dots i {
        width: 2px;
        height: 2px;
        background: #808080;
    }

    .dots {
        flex: none;
        display: flex;
        align-items: center;
        justify-content: center;
        gap: 3px;
        height: 6px;
        background: #bbb;
    }

    .panel-head {
        flex: none;
        display: flex;
        align-items: center;
        height: 15px;
        padding: 0 9px 0 5px;
        background: linear-gradient(90deg, #e8e8e8, #cdcdcd);
    }

    .panel-head h2 {
        flex: 1;
        margin-left: 6px;
    }

    .help {
        font-size: 13px;
        font-weight: bold;
        color: #999;
    }

    .fold {
        flex: none;
        display: flex;
        align-items: center;
        justify-content: center;
        height: 13px;
        background: #ebebeb;
    }

    .fold button {
        display: grid;
        place-items: center;
        width: 19px;
        height: 8px;
        border: 1px solid #b0b0b0;
    }

    /* left palettes */
    .left {
        display: flex;
        flex-direction: column;
        background: #ebebeb;
    }

    .tools {
        flex: 1;
        display: grid;
        grid-template-columns: repeat(4, 1fr);
        grid-auto-rows: 25px;
        background: #fff;
    }

    .tools button {
        position: relative;
        overflow: hidden;
    }

    .tools .on {
        background: #c9c9c9;
    }

    .more {
        position: absolute;
        right: 0;
        bottom: 0;
        border-bottom: 5px solid #222;
        border-left: 5px solid transparent;
    }

    .attrs {
        flex: none;
        height: 207px;
        padding: 5px 9px 0 8px;
    }

    .attr-row {
        display: flex;
        align-items: center;
        gap: 6px;
        height: 18px;
    }

    .attrs select {
        border: 0;
        appearance: none;
        background: url("data:image/svg+xml,%3Csvg xmlns='http://www.w3.org/2000/svg' width='8' height='10'%3E%3Cpath d='M1 4l3-3 3 3M1 6l3 3 3-3' fill='none' stroke='%23333'/%3E%3C/svg%3E") no-repeat right center;
    }

    .solid,
    .weight {
        flex: 1;
        display: flex;
        align-items: center;
        gap: 14px;
        height: 17px;
        padding: 0 3px 0 7px;
        border: 1px solid #c9c9c9;
        border-radius: 4px;
        background: #fff;
    }

    .solid i {
        width: 13px;
        height: 13px;
        border: 1px solid #000;
        background: #333;
    }

    .solid select,
    .weight select {
        flex: 1;
    }

    .swatch {
        height: 25px;
        margin: 2px 0 5px;
        border: 1px solid #b0b0b0;
        border-top-color: #808080;
        background: #fff;
    }

    .black {
        background: #000;
        box-shadow: inset 0 0 0 1px #fff;
        margin-bottom: 4px;
    }

    .flat {
        display: grid;
        place-items: center;
        border: 1px solid #b5b5b5;
        background: #f0f0f0;
    }

    .opacity {
        width: 100%;
        height: 15px;
    }

    .shadow-row {
        display: grid;
        grid-template-columns: 1fr 20px 21px;
        align-items: center;
        height: 14px;
        margin: 8px 0 6px;
        padding-left: 2px;
        font-size: 10px;
    }

    .shadow-row .flat {
        height: 14px;
    }

    .sq {
        width: 7px;
        height: 7px;
        border: 1px solid #888;
        background: #fff;
    }

    .weight {
        height: 15px;
        gap: 4px;
        font-size: 10px;
    }

    .weight i {
        width: 56px;
        height: 3px;
        background: #000;
    }

    .ends {
        display: flex;
        justify-content: space-between;
        height: 16px;
        margin: 9px -4px 4px -3px;
    }

    .ends .flat {
        width: 17px;
    }

    .ends .flat:nth-child(2) {
        width: 31px;
    }

    .tri {
        border-top: 4px solid #777;
        border-left: 3px solid transparent;
        border-right: 3px solid transparent;
    }

    .sets {
        flex: none;
        display: grid;
        grid-auto-rows: 25px;
        height: 548px;
        align-content: end;
        overflow: hidden;
        font-size: 10px;
        background: #fff;
    }

    .set {
        display: grid;
        grid-template-columns: 35px 71px 1fr;
        align-items: center;
        text-align: left;
        white-space: nowrap;
    }

    i.right {
        width: 0;
        height: 0;
        border: 4px solid transparent;
        border-left: 5px solid #111;
        border-right: 0;
    }

    .cells {
        flex: none;
        display: grid;
        grid-template-columns: repeat(4, 1fr);
        grid-auto-rows: 24px;
        gap: 1px;
        padding: 0 1px 1px 0;
        background: #9c9c9c;
    }

    .cells button {
        display: grid;
        place-items: center;
        background: #eee;
    }

    .cells .on {
        background: #c9c9c9;
    }

    .left > .cells:last-child {
        margin-bottom: 8px;
    }

    /* document area */
    .center {
        display: flex;
        flex-direction: column;
    }

    .tabs {
        height: 24px;
        background: #868686;
    }

    .tab {
        display: grid;
        width: 240px;
    }

    .tab > * {
        grid-area: 1 / 1;
    }

    .tab a {
        display: flex;
        align-items: center;
        gap: 4px;
        padding-left: 16px;
        font-size: 12px;
        color: #000;
        text-decoration: none;
    }

    .viewbar,
    .modebar {
        display: grid;
        align-items: center;
        justify-items: center;
        font-size: 10px;
        color: #777;
        background: #ebebeb;
    }

    .viewbar {
        grid-template-columns:
            22px 24px 2px 34px 210px 14px 48px 210px 14px 25px 211px 6px 44px 8px
            24px 23px 6px 25px 58px 10px 17px 31px 4px 210px 8px 24px 64px 8px
            24px 25px 4px 210px 8px 42px 1fr;
        height: 26px;
        border-bottom: 1px solid #a5a5a5;
    }

    .viewbar .ico,
    .modebar .ico {
        opacity: 0.6;
    }

    .modebar .strong .ico {
        opacity: 0.85;
    }

    .viewbar .menu .ico {
        opacity: 1;
    }

    .viewbar > select {
        width: 100%;
        height: 15px;
        padding-left: 9px;
        background-color: #f6f6f6;
        color: #777;
    }

    .sep {
        width: 1px;
        height: 17px;
        background: #cacaca;
    }

    .pair {
        display: flex;
        gap: 2px;
        width: 46px;
    }

    .icon-select {
        display: grid;
        grid-template-columns: 24px 1fr;
        align-items: center;
        justify-items: center;
        width: 100%;
        height: 15px;
        border: 1px solid #c6c6c6;
        border-radius: 4px;
        background: #f6f6f6;
    }

    .icon-select .ico {
        height: 13px;
    }

    .icon-select select,
    .zoom,
    .glass select {
        width: 100%;
        height: 13px;
        border: 0;
        background-color: transparent;
    }

    .zoom {
        height: 15px;
        border: 1px solid #c6c6c6;
        background: #f4f4f4 url("data:image/svg+xml,%3Csvg xmlns='http://www.w3.org/2000/svg' width='8' height='6'%3E%3Cpath d='M1 1l3 3 3-3' fill='none' stroke='%23777' stroke-width='1.3'/%3E%3C/svg%3E") no-repeat right 2px center;
    }

    .zoom input {
        display: block;
        width: 44px;
        height: 13px;
        padding-left: 3px;
        color: #bbb;
        background: #fff;
    }

    .angle {
        width: 100%;
        height: 15px;
        padding-left: 3px;
        border: 1px solid #c6c6c6;
        color: #bbb;
        background: #fff;
    }

    .viewbar .pressed {
        width: 25px;
        height: 21px;
    }

    .pressed {
        display: grid;
        place-items: center;
        width: 29px;
        height: 24px;
        border: 1px solid #bcbcbc;
        background: #d4d4d4;
    }

    .modebar {
        grid-template-columns:
            34px 28px 30px 14px 29px 13px 29px 32px 24px 17px 29px 15px 1fr
            44px 40px 46px 44px 40px 34px 38px 38px 28px;
        height: 36px;
    }

    .modebar button {
        display: flex;
        align-items: center;
        justify-content: center;
    }

    .chev {
        width: 5px;
        height: 5px;
        border: solid #888;
        border-width: 0 1px 1px 0;
        transform: rotate(45deg);
    }

    .mode-text {
        justify-self: start;
        color: #666;
    }

    .canvas {
        display: block;
        flex: 1;
        width: 100%;
        min-height: 0;
    }

    .ruler path,
    .ruler circle {
        fill: none;
        stroke: #555;
    }

    .ruler text {
        font: 9px "Liberation Sans", sans-serif;
        fill: #555;
    }

    .tiny {
        font: 4px "Liberation Sans", sans-serif;
        fill: #c46a10;
    }

    .sheet-text {
        font: 9px "Liberation Sans", sans-serif;
        fill: #111;
    }

    /* object info */
    .info {
        display: flex;
        flex-direction: column;
        font-size: 9px;
        background: #ebebeb;
    }

    .info .panel-head,
    .resources .panel-head {
        font-size: 11px;
        padding-left: 4px;
    }

    .tab-strip {
        flex: none;
        position: relative;
        display: flex;
        justify-content: center;
        height: 21px;
        padding-top: 4px;
        background: linear-gradient(#ebebeb 12px, #cdcdcd 12px, #cdcdcd 13px, #e1e1e1 13px);
    }

    .segments {
        display: flex;
        height: 15px;
        border: 1px solid #bdbdbd;
        border-radius: 4px;
        overflow: hidden;
        font-size: 10px;
        line-height: 13px;
        background: #fff;
    }

    .segments button {
        padding: 0 9px;
        border-right: 1px solid #ddd;
    }

    .segments button:last-child {
        border: 0;
    }

    .segments .on {
        background: #e6e6e6;
    }

    .corner {
        position: absolute;
        top: 1px;
        right: 1px;
        display: grid;
        place-items: center;
        width: 11px;
        height: 10px;
        border: 1px solid #999;
    }

    .corner i.right {
        border-width: 2px 0 2px 3px;
    }

    .info h3 {
        flex: none;
        height: 21px;
        padding: 4px 2px 0;
        font-size: 10px;
        font-weight: bold;
        border-bottom: 1px solid #c6c6c6;
        background: #e1e1e1;
    }

    .shape {
        flex: none;
        display: flex;
        flex-direction: column;
        height: 765px;
        padding: 2px 5px 0;
        border: solid #c6c6c6;
        border-width: 0 1px 1px;
    }

    .row {
        flex: none;
        display: grid;
        grid-template-columns: 35px 1fr;
        align-items: center;
        height: 20px;
        line-height: 13px;
    }

    .row > :first-child {
        padding-left: 2px;
    }

    .row.wide {
        grid-template-columns: 105px 1fr;
    }

    .row select {
        height: 15px;
        padding-left: 6px;
    }

    .row .layer {
        padding-left: 26px;
        background-image:
            url("data:image/svg+xml,%3Csvg xmlns='http://www.w3.org/2000/svg' width='8' height='10'%3E%3Cpath d='M1 4l3-3 3 3M1 6l3 3 3-3' fill='none' stroke='%23333'/%3E%3C/svg%3E"),
            url("data:image/svg+xml,%3Csvg xmlns='http://www.w3.org/2000/svg' width='12' height='11'%3E%3Cpath d='M1.5 7.500v-6h6v6zM10.500 1v7M9 1.500h3M0 9.500h9' fill='none' stroke='%23333'/%3E%3C/svg%3E");
        background-repeat: no-repeat;
        background-position: right 3px center, 11px center;
    }

    .info input:not([type='checkbox']) {
        height: 15px;
        padding-left: 3px;
        border: 1px solid #b8b8b8;
        background: #fff;
    }

    .xyz {
        flex: none;
        display: flex;
        height: 68px;
        margin: 3px 0 2px;
        padding: 4px 9px 4px 15px;
        border-radius: 3px;
        background: #e1e1e1;
    }

    .planes {
        display: grid;
        align-content: start;
        gap: 3px;
        padding-top: 5px;
    }

    .planes button {
        display: grid;
        place-items: center;
        width: 19px;
        height: 16px;
        border: 1px solid #bbb;
        background: #fff;
    }

    .planes .on {
        background: #c4c4c4;
    }

    .planes .ico {
        width: 17px;
        height: 14px;
    }

    .xyz-fields {
        flex: 1;
        display: grid;
        grid-auto-rows: 15px;
        gap: 5px;
        margin-left: 14px;
    }

    .xyz-fields label {
        display: grid;
        grid-template-columns: 16px 1fr;
    }

    .off {
        color: #8b8b8b;
    }

    .off select {
        background-color: #f2f2f2;
        border-color: #cfcfcf;
    }

    .check {
        flex: none;
        display: flex;
        align-items: center;
        gap: 3px;
        height: 17px;
    }

    .check.off {
        height: 21px;
        color: #aaa;
    }

    .check.last {
        height: 14px;
    }

    input[type='checkbox'] {
        appearance: none;
        width: 10px;
        height: 10px;
        border: 1px solid #b5b5b5;
        border-radius: 2px;
        background: #fff;
    }

    input[type='checkbox']:checked {
        background: #fff url("data:image/svg+xml,%3Csvg xmlns='http://www.w3.org/2000/svg' width='8' height='8'%3E%3Cpath d='M1 4l2 3 4-6' fill='none' stroke='%23222' stroke-width='1.3'/%3E%3C/svg%3E") no-repeat center;
    }

    input[type='checkbox']:disabled {
        opacity: 0.5;
    }

    .mini {
        flex: none;
        height: 15px;
        margin: 5px 0 0;
        border: 1px solid #c4c4c4;
        border-radius: 4px;
        line-height: 13px;
        background: #fff;
    }

    .mini:disabled {
        color: #b0b0b0;
        background: #f2f2f2;
        margin-bottom: 2px;
    }

    .mini.blue {
        border-color: #1a6fe0;
        color: #dbe9ff;
        background: linear-gradient(#4a9bfb, #0064e0);
    }

    .name-row {
        flex: none;
        display: grid;
        grid-template-columns: 35px 1fr;
        align-items: center;
        height: 23px;
        padding: 2px 2px 0 5px;
    }

    .tab-strip.nav {
        height: 30px;
        padding-top: 6px;
        background: linear-gradient(#ebebeb 14px, #cdcdcd 14px, #cdcdcd 15px, #e1e1e1 15px);
    }

    .nav .corner {
        top: 2px;
        right: 8px;
    }

    .segments.icons {
        height: 17px;
    }

    .icons button {
        width: 28px;
        padding: 0 6px;
    }

    .icons .ico {
        width: 15px;
        height: 15px;
    }

    .nav-list {
        flex: 1;
        margin: 0 3px 1px;
        border: 1px solid #c9c9c9;
        background: #fff;
    }

    .nav-list th {
        height: 21px;
        padding-left: 4px;
        border-right: 1px solid #ddd;
        border-bottom: 1px solid #ccc;
        font-size: 10px;
        color: #444;
    }

    .nav-list td {
        height: 15px;
        padding-left: 3px;
        line-height: 14px;
        background: #dcdcdc;
    }

    .c1 {
        width: 25px;
    }

    .c2 {
        width: 83px;
    }

    .c3 {
        width: 153px;
    }

    .c4 {
        width: 28px;
    }

    /* resource manager */
    .resources {
        display: flex;
        flex-direction: column;
        min-width: 0;
        background: #ebebeb;
    }

    .resources .panel-head {
        padding-left: 3px;
    }

    .resources > .dots {
        background: none;
    }

    .res-bar {
        flex: none;
        display: flex;
        align-items: center;
        gap: 6px;
        height: 28px;
        padding: 1px 7px 0 5px;
    }

    .sq-btn {
        display: grid;
        place-items: center;
        width: 21px;
        height: 18px;
        border: 1px solid #c0c0c0;
        border-radius: 4px;
        background: #f7f7f7;
    }

    .sq-btn .ico {
        height: 15px;
    }

    .dim {
        opacity: 0.7;
    }

    .search {
        flex: 1;
        display: flex;
        align-items: center;
        justify-content: center;
        gap: 4px;
        height: 18px;
        border: 1px solid #c0c0c0;
        border-radius: 4px;
        background: #fff;
    }

    .search input {
        width: 48px;
        outline: 0;
    }

    .search input::placeholder {
        color: #b8b8b8;
    }

    .chevrons {
        width: 14px;
        padding-left: 4px;
    }

    .tree {
        flex: none;
        height: 504px;
        margin: 0 5px;
        border: 1px solid #c0c0c0;
        border-top: 0;
        background: #fff;
        overflow: hidden;
    }

    .tree li {
        display: flex;
        align-items: center;
        height: 19px;
        white-space: nowrap;
    }

    .tree .ico {
        margin-right: 5px;
    }

    .root {
        padding-left: 8px;
        border-top: 1px solid #d2d2d2;
        font-weight: bold;
        background: #f5f5f5;
    }

    .picked {
        padding-left: 26px;
        background: #dadada;
    }

    .gap {
        width: 9px;
    }

    .down {
        border: 4px solid transparent;
        border-top: 8px solid #888;
        border-bottom: 0;
        margin-right: 1px;
    }

    .lib {
        padding-left: 25px;
    }

    .lib i.right {
        margin-right: 3px;
        border-width: 5px 0 5px 7px;
        border-left-color: #888;
    }

    .lib .ico {
        margin-right: 4px;
    }

    .browser,
    .preview,
    .data {
        margin: 0 5px;
        border: 1px solid #c0c0c0;
        background: #fff;
    }

    .browser {
        flex: 1;
    }

    .browser nav {
        display: flex;
        align-items: center;
        height: 20px;
        padding-left: 6px;
        border-bottom: 1px solid #c0c0c0;
        color: #333;
    }

    .browser nav span {
        margin-left: 3px;
    }

    .browser nav b {
        margin: 0 8px;
    }

    .browser figure {
        width: 66px;
        margin: 11px 3px;
        text-align: center;
        color: #c00010;
    }

    .browser figcaption {
        font-size: 11px;
    }

    .preview {
        flex: none;
        display: flex;
        align-items: end;
        height: 201px;
        border-color: #999;
    }

    .preview-bar {
        flex: 1;
        display: flex;
        align-items: center;
        gap: 12px;
        height: 26px;
        padding-left: 9px;
        background: #0575e6;
    }

    .glass {
        display: grid;
        grid-template-columns: 28px 1fr;
        align-items: center;
        justify-items: center;
        width: 44px;
        height: 16px;
        border-radius: 4px;
        background: #80b8f2;
    }

    .glass .ico {
        height: 14px;
        opacity: 0.7;
    }

    .data {
        flex: none;
        height: 164px;
    }

    .data th {
        height: 22px;
        padding-left: 3px;
        border-right: 1px solid #ddd;
        border-bottom: 1px solid #ccc;
        color: #333;
    }

    .resources footer {
        flex: none;
        display: flex;
        align-items: center;
        gap: 16px;
        height: 24px;
        padding: 0 5px;
    }

    .push {
        height: 21px;
        padding: 0 7px;
        border: 1px solid #c9c9c9;
        border-bottom-color: #aaa;
        border-radius: 4px;
        background: #fff;
    }

    .resources .push {
        height: 18px;
    }

    .push:disabled {
        color: #b5b5b5;
        background: #f0f0f0;
        border-color: #cfcfcf;
    }

    .status {
        display: flex;
        align-items: center;
        font-size: 9px;
        color: #777;
        background: #d7d7d7;
        border-right: 15px solid #e6e6e6;
    }

    .hint {
        flex: 1;
        padding-left: 8px;
    }

    .coord {
        display: flex;
        gap: 6px;
        width: 80px;
        height: 15px;
        padding-left: 3px;
        border: 1px solid #b0b0b0;
        border-left-width: 2px;
    }

    .bell {
        margin-left: 2px;
    }

    /* settings window, floating over the drawing */
    .dialog {
        position: absolute;
        top: 301px;
        left: 448px;
        width: 1124px;
        border-radius: 5px;
        font-size: 12px;
        background: #ebebeb;
        box-shadow: 0 0 1px #666, 0 20px 42px rgba(0, 0, 0, 0.6);
    }

    .dialog header {
        display: grid;
        grid-template-columns: 1fr auto 1fr;
        align-items: center;
        height: 22px;
        padding: 0 4px 0 8px;
        border-bottom: 1px solid #b5b5b5;
        border-radius: 5px 5px 0 0;
        background: linear-gradient(#e8e6e8, #d1cfd1);
    }

    .dialog header b {
        justify-self: end;
    }

    .dialog h1,
    .dialog .push,
    .dialog .check,
    .panes,
    .style-row select {
        font-size: 13px;
    }

    .style-row {
        display: flex;
        align-items: center;
        height: 72px;
        padding: 7px 0 0 39px;
    }

    .style-row select {
        width: 224px;
        height: 21px;
        margin: 0 16px 0 10px;
        padding-left: 8px;
        border-radius: 4px;
        background: #fff url("data:image/svg+xml,%3Csvg xmlns='http://www.w3.org/2000/svg' width='17' height='21'%3E%3Crect width='17' height='21' fill='%232b8df8'/%3E%3Cpath d='M5 8l3-3 3 3M5 12l3 3 3-3' fill='none' stroke='%23fff' stroke-width='1.5'/%3E%3C/svg%3E") no-repeat right center;
    }

    .body {
        display: grid;
        grid-template-columns: 160px 583px 1fr;
        column-gap: 29px;
        height: 651px;
        padding: 0 20px 0 17px;
    }

    .panes {
        border: 3px solid #90c3f3;
        background: #fff;
        padding-top: 1px;
    }

    .panes button {
        display: block;
        width: 100%;
        height: 17px;
        padding-left: 2px;
        text-align: left;
    }

    .panes .on {
        color: #fff;
        background: #0a69d8;
    }

    .group h2 {
        height: 19px;
        padding: 4px 10px 0;
    }

    .group-box {
        height: 622px;
        padding: 11px 22px;
        border-top: 1px solid #d0d0d0;
        border-radius: 3px;
        background: #e1e1e1;
    }

    .table-box {
        width: 490px;
        height: 402px;
        border: 1px solid #c6c6c6;
        background: #fff;
        font-size: 11px;
    }

    .table-box th {
        height: 22px;
        padding-left: 3px;
        border-bottom: 1px solid #ccc;
        border-right: 1px solid #ddd;
        color: #444;
    }

    .table-box th:last-child {
        border-right: 0;
    }

    .table-box td {
        height: 17px;
        padding-left: 7px;
        line-height: 15px;
    }

    .table-box .pin {
        padding: 0 0 0 23px;
    }

    .pin svg {
        display: block;
    }

    .f1 {
        width: 59px;
    }

    .f2 {
        width: 120px;
    }

    .f3 {
        width: 281px;
    }

    .edit-row {
        display: flex;
        gap: 12px;
        margin-top: 12px;
    }

    .edit-row .push,
    .actions .push {
        width: 69px;
        padding: 0;
    }

    .note {
        width: 296px;
        height: 100px;
        margin: 53px 0 0 34px;
        border: 1px solid #c6c6c6;
        background: #fff;
    }

    .view {
        margin-left: -14px;
    }

    .view h2 {
        display: flex;
        align-items: center;
        gap: 4px;
        height: 32px;
    }

    .view h2::after {
        content: "";
        flex: 1;
        height: 1px;
        background: #ccc;
    }

    .paper {
        display: grid;
        align-items: center;
        height: 581px;
        background: #fff;
    }

    .paper svg {
        display: block;
        width: 100%;
    }

    .view .check {
        height: 30px;
        gap: 6px;
    }

    .view .check input {
        width: 13px;
        height: 13px;
    }

    .tip {
        height: 18px;
        margin: 9px 20px 0;
        padding: 1px 3px;
        border: 1px solid #d2d2d2;
        border-radius: 3px;
        font-size: 9px;
        background: #e1e1e1;
    }

    .actions {
        display: flex;
        justify-content: flex-end;
        gap: 12px;
        padding: 20px 20px 19px;
    }

    .push.ok {
        border-color: #2a80e8;
        color: #fff;
        background: linear-gradient(#5cb0fc, #0a7cf8);
    }

    .pointer {
        position: absolute;
        left: 109px;
        top: 98px;
        filter: drop-shadow(3px 4px 2px rgba(0, 0, 0, 0.5));
    }
</style>
